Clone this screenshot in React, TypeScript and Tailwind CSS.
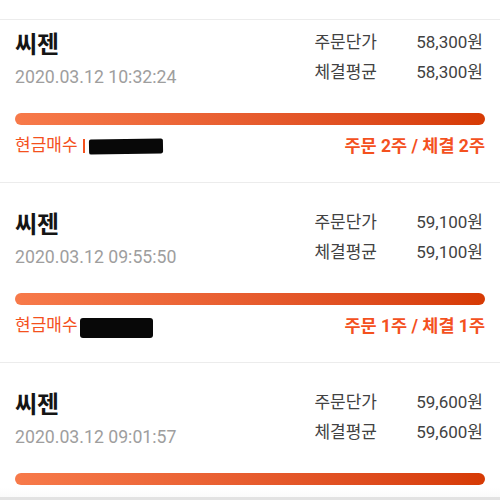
import React from 'react';

type Order = {
  name: string;
  time: string;
  price: string;
  avg: string;
  qty: string;
  pipe: boolean;
};

const orders: Order[] = [
  { name: '씨젠', time: '2020.03.12 10:32:24', price: '58,300원', avg: '58,300원', qty: '주문 2주 / 체결 2주', pipe: true },
  { name: '씨젠', time: '2020.03.12 09:55:50', price: '59,100원', avg: '59,100원', qty: '주문 1주 / 체결 1주', pipe: false },
  { name: '씨젠', time: '2020.03.12 09:01:57', price: '59,600원', avg: '59,600원', qty: '주문 1주 / 체결 1주', pipe: false },
];

function OrderCard({ order, first }: { order: Order; first: boolean }) {
  return (
    <div className={first ? 'px-[15px] pt-[9px] pb-[24px]' : 'border-t border-[#ececec] px-[15px] pt-[26px] pb-[24px]'}>
      {/* top row */}
      <div className="flex justify-between items-start">
        <div>
          <div className="text-[24px] leading-[32px] font-bold text-[#151515]">{order.name}</div>
          <div className="mt-1 text-[17.7px] leading-[24px] text-[#9e9e9e]">{order.time}</div>
        </div>
        <div className="-mt-[2px] mr-[2px] grid grid-cols-[auto_70px] gap-x-[36px] text-[17px] leading-[30px] text-[#424242]">
          <span>주문단가</span>
          <span className="text-right">{order.price}</span>
          <span>체결평균</span>
          <span className="text-right">{order.avg}</span>
        </div>
      </div>

      {/* progress bar */}
      <div className="mt-6 h-3 rounded-full bg-gradient-to-r from-[#f77a4a] to-[#d63a04]" />

      {/* footer */}
      <div className="mt-[9px] flex justify-between items-center h-6 text-[17px]">
        <div className="flex items-center text-[#f4511e]">
          <span>현금매수</span>
          {order.pipe ? (
            <>
              <span className="ml-[5px] w-[2px] h-[14px] bg-[#f4511e]" />
              <span className="ml-[4px] w-[74px] h-[15px] bg-[#080808] rounded-[2px] -rotate-1" />
            </>
          ) : (
            <span className="ml-[2px] mt-[4px] w-[73px] h-[20px] bg-[#080808] rounded-[3px]" />
          )}
        </div>
        <div className="font-bold text-[17.5px] text-[#f4511e]">{order.qty}</div>
      </div>
    </div>
  );
}

export default function App() {
  return (
    <div
      className="min-h-screen bg-white overflow-hidden"
      style={{ fontFamily: 'Roboto, "Noto Sans CJK KR", sans-serif' }}
    >
      <div className="h-[20px] border-b border-[#ececec]" />
      {orders.map((o, i) => (
        <OrderCard key={i} order={o} first={i === 0} />
      ))}
      {/* bottom bar edge */}
      <div className="fixed bottom-0 left-0 right-0 flex flex-col">
        <div className="h-[9px] bg-gradient-to-b from-white to-[#fafafa]" />
        <div className="h-[3px] bg-[#e2e2e2]" />
      </div>
    </div>
  );
}
